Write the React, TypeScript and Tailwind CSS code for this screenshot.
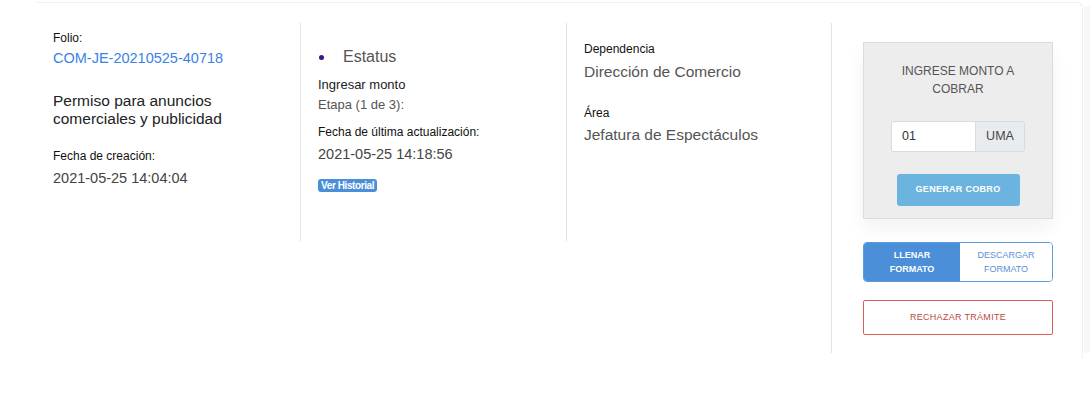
const font = "font-['Liberation_Sans',Arial,sans-serif]";

const App = () => {
  return (
    <div className={`w-[1090px] h-[414px] bg-white flex pl-[36px] ${font}`}>
      {/* card */}
      <div className="w-[1047px] h-[356px] mt-[2px] border-t border-r border-[#eef0f2] rounded-tr-[6px]">
        <div className="flex items-start mt-[20px]">
          {/* col 1 */}
          <div className="w-[264px] h-[218px] pl-[17px] pt-[6px]">
            <div className="text-[12px] leading-[18px] text-[#111]">Folio:</div>
            <div className="mt-[1px] text-[14.5px] leading-[20px] text-[#3b82e6]">COM-JE-20210525-40718</div>
            <div className="mt-[24px] text-[15.5px] leading-[18px] text-[#222]">
              Permiso para anuncios
              <br />
              comerciales y publicidad
            </div>
            <div className="mt-[19px] text-[12px] leading-[18px] text-[#111]">Fecha de creación:</div>
            <div className="mt-[3px] text-[14.5px] leading-[20px] text-[#444]">2021-05-25 14:04:04</div>
          </div>

          {/* col 2 */}
          <div className="w-[266px] h-[218px] border-l border-[#e3e3e3] pl-[17px] pt-[23px]">
            <div className="flex items-center text-[16px] leading-[22px] text-[#555]">
              <span className="ml-[1px] w-[5px] h-[5px] rounded-full bg-[#3d1580]" />
              <span className="ml-[19px]">Estatus</span>
            </div>
            <div className="mt-[8px] text-[13px] leading-[18px] text-[#222]">Ingresar monto</div>
            <div className="mt-[2px] text-[13px] leading-[18px] text-[#555]">Etapa (1 de 3):</div>
            <div className="mt-[9px] text-[12px] leading-[18px] text-[#111]">Fecha de última actualización:</div>
            <div className="mt-[3px] text-[14.5px] leading-[20px] text-[#444]">2021-05-25 14:18:56</div>
            <div className="mt-[15px] inline-flex items-center h-[13px] px-[3px] rounded-[3px] bg-[#4a90d9] text-white text-[10px] font-bold tracking-[-0.4px]">
              Ver Historial
            </div>
          </div>

          {/* col 3 */}
          <div className="w-[265px] h-[218px] border-l border-[#e3e3e3] pl-[17px] pt-[17px]">
            <div className="text-[12px] leading-[18px] text-[#111]">Dependencia</div>
            <div className="mt-[4px] text-[15.5px] leading-[20px] text-[#555]">Dirección de Comercio</div>
            <div className="mt-[22px] text-[12px] leading-[18px] text-[#111]">Área</div>
            <div className="mt-[3px] text-[15.5px] leading-[20px] text-[#555]">Jefatura de Espectáculos</div>
          </div>

          {/* col 4 */}
          <div className="w-[250px] border-l border-[#e3e3e3] pl-[31px] pt-[19px] pb-[18px]">
            <div className="w-[190px] h-[177px] bg-[#ededed] border border-[#dcdcdc] shadow-[0_10px_18px_rgba(0,0,0,0.05)] flex flex-col items-center pt-[19px]">
              <div className="text-center text-[12px] leading-[18px] text-[#555] uppercase">
                Ingrese monto a
                <br />
                cobrar
              </div>
              <div className="mt-[23px] flex h-[31px] w-[134px] border border-[#d8dbe0] rounded-[3px] overflow-hidden">
                <div className="flex-1 bg-white flex items-center pl-[10px] text-[12.5px] text-[#333]">01</div>
                <div className="w-[49px] bg-[#e9ecef] border-l border-[#d8dbe0] flex items-center justify-center text-[12.5px] text-[#444]">
                  UMA
                </div>
              </div>
              <button className="mt-[22px] w-[123px] h-[32px] rounded-[3px] bg-[#6cb4e0] text-white text-[9px] font-bold tracking-[0.3px]">
                GENERAR COBRO
              </button>
            </div>

            <div className="mt-[23px] flex w-[190px] h-[40px] rounded-[4px] border border-[#5b9be0] overflow-hidden">
              <div className="w-[96px] bg-[#4a8fd8] flex items-center justify-center text-center text-white text-[9px] font-bold leading-[14px]">
                LLENAR
                <br />
                FORMATO
              </div>
              <div className="flex-1 bg-white flex items-center justify-center text-center text-[#5b8fd6] text-[9px] leading-[14px]">
                DESCARGAR
                <br />
                FORMATO
              </div>
            </div>

            <div className="mt-[18px] w-[190px] h-[35px] border border-[#dc5f57] rounded-[2px] flex items-center justify-center text-[#b94a40] text-[9px] tracking-[0.3px]">
              RECHAZAR TRÁMITE
            </div>
          </div>
        </div>
      </div>
      <div className="ml-[1px] mt-[6px] w-[6px] h-[347px] bg-[#f7f8fa]" />
    </div>
  );
};

export default App;
